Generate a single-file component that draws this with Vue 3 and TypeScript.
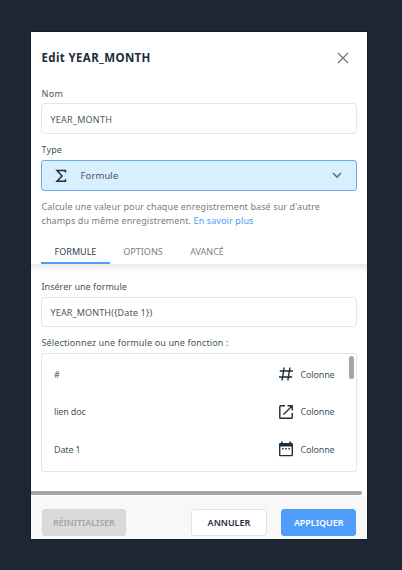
<script setup lang="ts">
import { ref } from 'vue'

interface Column {
  name: string
  icon: 'hash' | 'link' | 'date'
}

const name = ref('YEAR_MONTH')
const formula = ref('YEAR_MONTH({Date 1})')
const activeTab = ref(0)
const tabs: string[] = ['FORMULE', 'OPTIONS', 'AVANCÉ']
const columns: Column[] = [
  { name: '#', icon: 'hash' },
  { name: 'lien doc', icon: 'link' },
  { name: 'Date 1', icon: 'date' },
]
</script>

<template>
  <main class="page">
    <section class="modal">
      <header class="head">
        <h1>Edit YEAR_MONTH</h1>
        <svg class="close" viewBox="0 0 12 12"><path d="M1 1L11 11M11 1L1 11" /></svg>
      </header>

      <div class="general">
        <label class="label name-label">Nom</label>
        <div class="input"><span class="name-value">{{ name }}</span></div>
        <label class="label type-label">Type</label>
        <div class="select">
          <svg class="sigma" viewBox="0 0 12 14"><path d="M10.5 3.5V1.5H2L7 7L2 12.3H10.5V10.3" /></svg>
          <span class="select-value">Formule</span>
          <svg class="chevron" viewBox="0 0 10 7"><path d="M1 1L5 5L9 1" /></svg>
        </div>
        <p class="help">
          <span class="help-first">Calcule une valeur pour chaque enregistrement basé sur d'autre</span><br />
          <span class="help-second">champs du même enregistrement. <a>En savoir plus</a></span>
        </p>
      </div>

      <nav class="tabs">
        <button
          v-for="(tab, i) in tabs"
          :key="tab"
          class="tab"
          :class="{ active: i === activeTab }"
          @click="activeTab = i"
        >{{ tab }}</button>
      </nav>

      <div class="body">
        <label class="label insert-label">Insérer une formule</label>
        <div class="input formula"><span class="formula-value">{{ formula }}</span></div>
        <label class="label pick-label">Sélectionnez une formule ou une fonction :</label>
        <div class="list">
          <ul>
            <li v-for="col in columns" :key="col.name">
              <span class="col-name">{{ col.name }}</span>
              <svg v-if="col.icon === 'hash'" class="icon" viewBox="0 0 16 16">
                <path class="line" d="M1.8 5H15M1 11H14.2M6.2 1.5L4 14.5M12 1.5L9.8 14.5" />
              </svg>
              <svg v-else-if="col.icon === 'link'" class="icon" viewBox="0 0 16 16">
                <path class="line" d="M7 1.8H2.6Q1.8 1.8 1.8 2.6V13.4Q1.8 14.2 2.6 14.2H13.4Q14.2 14.2 14.2 13.4V9M9.5 1.8H14.2V6.5M14 2L5.5 10.5" />
              </svg>
              <svg v-else class="icon" viewBox="0 0 16 16">
                <path class="solid" fill-rule="evenodd" d="M3 .5H4.6V2H11.4V.5H13V2H13.7Q15 2 15 3.3V14Q15 15.3 13.7 15.3H2.3Q1 15.3 1 14V3.3Q1 2 2.3 2H3ZM2.4 5.4V13.9H13.6V5.4Z" />
                <path class="solid" d="M4 7H5.5V8.5H4ZM7.2 7H8.7V8.5H7.2ZM10.4 7H11.9V8.5H10.4Z" />
              </svg>
              <span class="kind">Colonne</span>
            </li>
          </ul>
          <div class="thumb"></div>
        </div>
      </div>

      <div class="scroll-x"></div>
      <footer class="foot">
        <button class="btn reset">RÉINITIALISER</button>
        <button class="btn cancel">ANNULER</button>
        <button class="btn apply">APPLIQUER</button>
      </footer>
    </section>
  </main>
</template>

<style>
body {
  background: #1c2733;
}
</style>

<style scoped>
* {
  box-sizing: border-box;
}
.page {
  height: 570px;
  padding: 32px 35px 0 31px;
  background: #1c2733;
  font-family: "Noto Sans", "Open Sans", sans-serif;
  font-size: 9px;
  color: #485560;
  overflow: hidden;
}
.modal {
  display: flex;
  flex-direction: column;
  height: 507px;
  background: #fff;
  box-shadow: 0 0 0 1px #13202c;
}
svg {
  display: block;
  flex: none;
  fill: none;
}
.head {
  display: flex;
  align-items: center;
  justify-content: space-between;
  height: 51px;
  padding: 0 18px 0 10.5px;
}
h1 {
  margin: 0;
  font-size: 11.5px;
  font-weight: 700;
  letter-spacing: 0.37px;
  color: #1c2d3b;
}
.close {
  width: 12px;
  height: 12px;
  stroke: #777;
  stroke-width: 1.3;
}
.general {
  height: 159px;
  padding: 0 10.5px 0 10px;
}
.label {
  display: block;
  height: 20px;
  padding-left: 0.5px;
  line-height: 21px;
  letter-spacing: 0.13px;
  white-space: nowrap;
}
.name-label {
  letter-spacing: 0.3px;
}
.input {
  display: flex;
  align-items: center;
  height: 31px;
  padding-left: 8.5px;
  border: 1px solid #e5e5e5;
  border-radius: 4px;
}
.name-value {
  padding-top: 1px;
  letter-spacing: 0.24px;
}
.formula-value {
  letter-spacing: 0.15px;
}
.type-label {
  height: 26px;
  line-height: 31px;
}
.select {
  display: flex;
  align-items: center;
  height: 31px;
  padding: 0 14px 0 13px;
  border: 1px solid #68aaf0;
  border-radius: 3px;
  background: #d7efff;
}
.sigma {
  width: 12px;
  height: 14px;
  stroke: #1c2d3b;
  stroke-width: 1.5;
}
.select-value {
  flex: 1;
  margin-left: 13.5px;
  font-size: 9.5px;
  letter-spacing: 0.1px;
}
.chevron {
  width: 10px;
  height: 7px;
  stroke: #66727c;
  stroke-width: 1.6;
}
.help {
  margin: 9px 0 0;
  padding-left: 0.5px;
  line-height: 14px;
  letter-spacing: 0.11px;
  color: #7c7c7c;
  white-space: nowrap;
}
.help a {
  color: #4b9bf9;
}
.tabs {
  display: flex;
  height: 22px;
  padding-left: 10px;
}
.tab {
  height: 22px;
  padding: 0;
  border: 0;
  border-bottom: 2px solid transparent;
  background: none;
  font: inherit;
  color: #808080;
  line-height: 18px;
}
.tab:nth-child(1) { width: 69px; }
.tab:nth-child(2) { width: 66px; }
.tab:nth-child(3) { width: 62px; }
.tab.active {
  border-bottom-color: #4b9bf9;
  color: #34424e;
}
.body {
  height: 227px;
  padding: 13px 10.5px 0 10px;
  background: linear-gradient(#e8e8e8, #f5f5f5 4px, #fff 10px);
}
.insert-label {
  line-height: 20px;
  letter-spacing: 0.03px;
}
.formula {
  height: 30px;
  background: #fff;
}
.pick-label {
  height: 26px;
  line-height: 31px;
}
.list {
  display: flex;
  height: 119px;
  border: 1px solid #e5e5e5;
  border-radius: 3px;
}
ul {
  flex: 1;
  margin: 0;
  padding: 1.5px 0 0;
  list-style: none;
}
li {
  display: flex;
  align-items: center;
  height: 37.5px;
  padding-left: 12px;
  letter-spacing: -0.15px;
}
.col-name {
  width: 223.5px;
}
.icon {
  width: 16px;
  height: 16px;
}
.line {
  stroke: #1c2d3b;
  stroke-width: 1.4;
}
.solid {
  fill: #1c2d3b;
}
.kind {
  margin-left: 7px;
}
.thumb {
  width: 5px;
  height: 23px;
  margin: 2px 2px 0 0;
  border-radius: 3px;
  background: #a5a5a5;
}
.scroll-x {
  height: 4px;
  margin-right: 5px;
  border-radius: 0 2px 2px 0;
  background: #a5a5a5;
}
.foot {
  display: flex;
  flex: 1;
  padding: 14px 10.5px 0;
  border-top: 0;
  background: linear-gradient(#fff 1px, #f8f8f8 2px);
}
.btn {
  height: 27px;
  padding: 0;
  border: 1px solid #e2e2e2;
  border-radius: 3px;
  font: 600 9px "Noto Sans", "Open Sans", sans-serif;
}
.reset {
  width: 85px;
  border-color: #d8d8d8;
  background: #dadada;
  color: #a6a6a6;
  letter-spacing: -0.1px;
}
.cancel {
  width: 76px;
  margin-left: 65px;
  background: #fff;
  color: #1c2d3b;
}
.apply {
  width: 76px;
  margin-left: 14px;
  border-color: #4b9bf9;
  background: #4f9cfa;
  color: #fff;
  letter-spacing: -0.05px;
}
</style>
